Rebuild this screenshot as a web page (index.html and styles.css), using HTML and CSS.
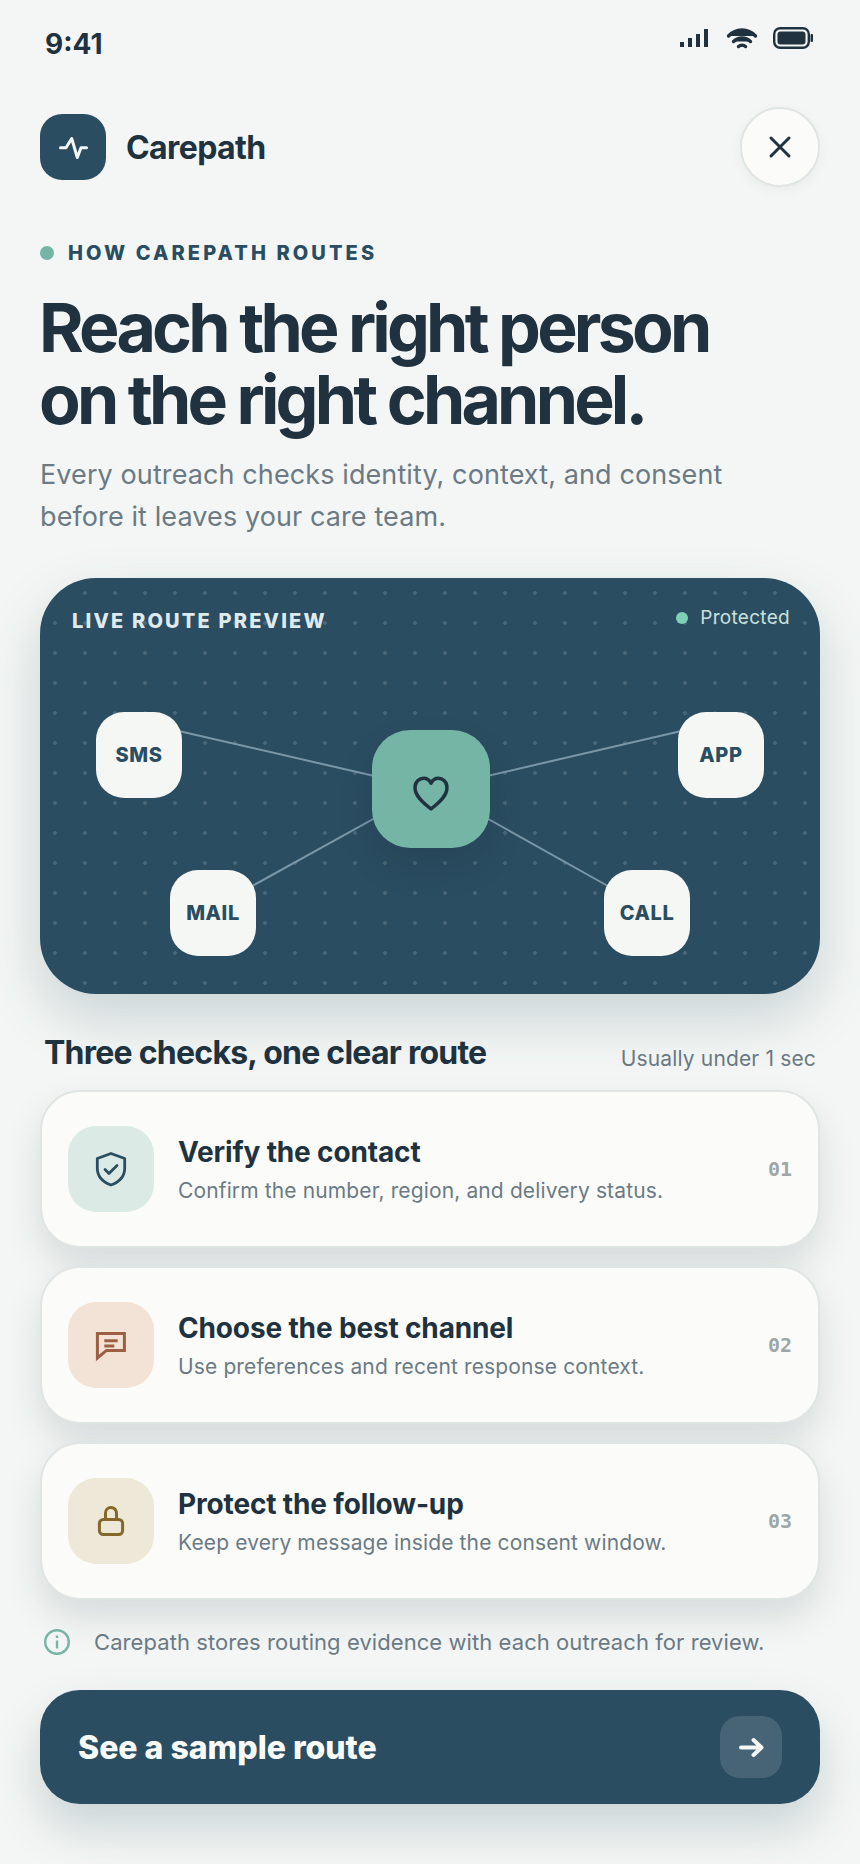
FILE: index.html
```html
<!DOCTYPE html>
<html lang="en">
<head>
    <meta charset="UTF-8">
    <title>Carepath</title>
    <link rel="stylesheet" href="styles.css">
</head>
<body>
    <div class="status-bar">
        <span class="time">9:41</span>
        <div class="status-icons">
            <svg width="28" height="18" viewBox="0 0 28 18"><rect x="0" y="13" width="4" height="5"/><rect x="8" y="9" width="4" height="9"/><rect x="16" y="5" width="4" height="13"/><rect x="24" y="0" width="4" height="18"/></svg>
            <svg class="wifi" width="32" height="22" viewBox="0 0 32 22" fill="none" stroke="#20323f" stroke-width="3.400" stroke-linecap="round"><path d="M2.500 9C10 1 22 1 29.500 9"/><path d="M7.500 14.500c5-4.600 12-4.600 17 0"/><path d="M12.500 19.500c2-1.800 5-1.800 7 0"/></svg>
            <svg width="40" height="22" viewBox="0 0 40 22"><rect x="1.200" y="1.200" width="34.600" height="19.600" rx="6" fill="none" stroke="#20323f" stroke-width="2.400"/><rect x="4.500" y="4.500" width="28" height="13" rx="3" fill="#20323f"/><rect x="37.500" y="7" width="2.500" height="8" rx="1" fill="#20323f"/></svg>
        </div>
    </div>

    <div class="brand-row">
        <div class="brand">
            <div class="brand-logo">
                <svg width="32" height="32" viewBox="0 0 32 32" fill="none" stroke="#f5f7f5" stroke-width="3" stroke-linecap="round" stroke-linejoin="round"><path d="M3.500 16.700H9L14.700 7.500 20.300 26.500 24 16.700h5.500"/></svg>
            </div>
            <span class="brand-name">Carepath</span>
        </div>
        <button class="close-btn">
            <svg width="30" height="30" viewBox="0 0 30 30" fill="none" stroke="#20323f" stroke-width="3" stroke-linecap="round"><path d="M6 6l18 18M24 6L6 24"/></svg>
        </button>
    </div>

    <div class="eyebrow"><span class="dot"></span>HOW CAREPATH ROUTES</div>
    <h1>Reach the right person<br>on the right channel.</h1>
    <p class="lead">Every outreach checks identity, context, and consent<br>before it leaves your care team.</p>

    <section class="route-card">
        <div class="route-head">
            <span class="route-title">LIVE ROUTE PREVIEW</span>
            <span class="protected"><span class="protected-dot"></span>Protected</span>
        </div>
        <svg class="route-lines" width="780" height="416" viewBox="0 0 780 416" fill="none" stroke="#7a97a8" stroke-width="2">
            <path d="M130 151L391 211"/>
            <path d="M650 151L391 211"/>
            <path d="M205 312L391 209"/>
            <path d="M575 312L391 209"/>
        </svg>
        <div class="node node-sms">SMS</div>
        <div class="node node-app">APP</div>
        <div class="node node-mail">MAIL</div>
        <div class="node node-call">CALL</div>
        <div class="hub">
            <svg width="46" height="46" viewBox="0 0 44 44" fill="none" stroke="#20323f" stroke-width="3.300" stroke-linejoin="round"><path d="M22 41C14 35 6.700 28.500 6.700 20.500 6.700 15 10.800 11.700 15 11.700c3 0 5.500 1.800 7 4.800 1.500-3 4-4.800 7-4.800 4.200 0 8.300 3.300 8.300 8.800C37.300 28.500 30 35 22 41z"/></svg>
        </div>
    </section>

    <div class="checks-head">
        <h2>Three checks, one clear route</h2>
        <span class="checks-note">Usually under 1 sec</span>
    </div>

    <div class="check-list">
        <div class="check">
            <div class="check-icon icon-green">
                <svg width="36" height="36" viewBox="0 0 36 36" fill="none" stroke="#2b4d61" stroke-width="2.800" stroke-linecap="round" stroke-linejoin="round"><path d="M18 2.500l13.700 5V17C31.700 26 25 31.500 18 34 11 31.500 4.300 26 4.300 17V7.500z"/><path d="M12 18.500l4 4 8-8"/></svg>
            </div>
            <div class="check-text">
                <h3>Verify the contact</h3>
                <p>Confirm the number, region, and delivery status.</p>
            </div>
            <span class="check-num">01</span>
        </div>
        <div class="check">
            <div class="check-icon icon-peach">
                <svg width="36" height="36" viewBox="0 0 36 36" fill="none" stroke="#9c5f42" stroke-width="3"><path d="M4.400 6.400h27v17H13.500L4.400 31z"/><path d="M11.300 13.700h13.400M11.300 19h10"/></svg>
            </div>
            <div class="check-text">
                <h3>Choose the best channel</h3>
                <p>Use preferences and recent response context.</p>
            </div>
            <span class="check-num">02</span>
        </div>
        <div class="check">
            <div class="check-icon icon-sand">
                <svg width="36" height="36" viewBox="0 0 36 36" fill="none" stroke="#86672a" stroke-width="3" stroke-linecap="round" stroke-linejoin="round"><rect x="6.400" y="16.400" width="23.200" height="15.200" rx="4"/><path d="M12.500 16.400V10a5.500 5.500 0 0 1 11 0v6.400"/></svg>
            </div>
            <div class="check-text">
                <h3>Protect the follow-up</h3>
                <p>Keep every message inside the consent window.</p>
            </div>
            <span class="check-num">03</span>
        </div>
    </div>

    <div class="evidence">
        <svg width="26" height="26" viewBox="0 0 26 26" fill="none" stroke="#74b5a6" stroke-width="2.400"><circle cx="13" cy="13" r="11.800"/><path d="M13 11.500v8M13 6.500v2.600"/></svg>
        <span>Carepath stores routing evidence with each outreach for review.</span>
    </div>

    <button class="cta">
        <span>See a sample route</span>
        <span class="cta-arrow">
            <svg width="28" height="28" viewBox="0 0 28 28" fill="none" stroke="#f5f7f5" stroke-width="4" stroke-linecap="round" stroke-linejoin="round"><path d="M4 14.500h20M16.500 7l8 7.500-8 7.500"/></svg>
        </span>
    </button>
</body>
</html>
```

FILE: styles.css
```css
* {
    box-sizing: border-box;
}

body {
    margin: 0;
    height: 1864px;
    padding: 0 40px;
    font-family: Inter, "Liberation Sans", sans-serif;
    color: #20323f;
    background-color: #f3f6f4;
    overflow: hidden;
}

.status-bar {
    display: flex;
    justify-content: space-between;
    height: 107px;
    padding: 26px 7px 0 5px;
}

.time {
    font-size: 28px;
    font-weight: 700;
    line-height: 36px;
}

.status-icons {
    display: flex;
    gap: 18px;
    height: 22px;
    margin-top: 1px;
    align-items: center;
}

.status-icons svg {
    fill: #20323f;
}

.status-icons .wifi {
    margin-right: -3px;
}

.brand-row {
    display: flex;
    justify-content: space-between;
    align-items: center;
    height: 80px;
}

.brand {
    display: flex;
    align-items: center;
    gap: 20px;
}

.brand-logo {
    width: 66px;
    height: 66px;
    border-radius: 22px;
    background-color: #2b4d61;
    display: flex;
    align-items: center;
    justify-content: center;
}

.brand-name {
    margin-top: 1px;
    font-size: 32px;
    font-weight: 700;
    letter-spacing: -0.6px;
}

.close-btn {
    width: 80px;
    height: 80px;
    padding: 0;
    border-radius: 50%;
    border: 2px solid #dfe5e2;
    background-color: #fbfcfa;
    display: flex;
    align-items: center;
    justify-content: center;
    box-shadow: 0 4px 12px rgba(32, 50, 63, 0.05);
}

.eyebrow {
    display: flex;
    align-items: center;
    gap: 14px;
    margin-top: 52px;
    font-size: 20px;
    font-weight: 800;
    letter-spacing: 3.1px;
    line-height: 28px;
    color: #2b4d61;
}

.dot {
    width: 14px;
    height: 14px;
    border-radius: 50%;
    background-color: #74b5a6;
}

h1 {
    margin: 24px 0 0 -1px;
    font-size: 68px;
    font-weight: 700;
    line-height: 72px;
    letter-spacing: -3.8px;
}

.lead {
    margin: 19px 0 0;
    font-size: 27px;
    line-height: 42px;
    letter-spacing: 0.1px;
    color: #6b7a84;
}

.route-card {
    position: relative;
    height: 416px;
    margin-top: 40px;
    border-radius: 56px;
    background-color: #2b4d61;
    background-image: radial-gradient(circle, rgba(255, 255, 255, 0.14) 1.6px, transparent 2.2px);
    background-size: 30px 30px;
    box-shadow: 0 24px 56px rgba(43, 77, 97, 0.2);
}

.route-head {
    display: flex;
    justify-content: space-between;
    align-items: flex-start;
    padding: 31px 30px 0 32px;
}

.route-title {
    font-size: 20px;
    font-weight: 800;
    letter-spacing: 2.2px;
    line-height: 24px;
    color: #dfeaee;
}

.protected {
    display: flex;
    align-items: center;
    gap: 12px;
    margin-top: -3px;
    font-size: 19px;
    letter-spacing: 0.3px;
    line-height: 24px;
    color: #c9e0dc;
}

.protected-dot {
    width: 12px;
    height: 12px;
    border-radius: 50%;
    background-color: #7fd1b5;
}

.route-lines {
    position: absolute;
    left: 0;
    top: 0;
}

.node {
    position: absolute;
    width: 86px;
    height: 86px;
    border-radius: 28px;
    background-color: #f5f7f5;
    display: flex;
    align-items: center;
    justify-content: center;
    font-size: 20px;
    font-weight: 800;
    letter-spacing: 0.6px;
    color: #2b4d61;
}

.node-sms { left: 56px; top: 134px; }
.node-app { left: 638px; top: 134px; }
.node-mail { left: 130px; top: 292px; }
.node-call { left: 564px; top: 292px; }

.hub {
    position: absolute;
    left: 332px;
    top: 152px;
    width: 118px;
    height: 118px;
    border-radius: 38px;
    background-color: #74b5a6;
    display: flex;
    align-items: center;
    justify-content: center;
    box-shadow: 0 18px 32px rgba(20, 40, 55, 0.18);
}

.checks-head {
    display: flex;
    justify-content: space-between;
    align-items: flex-start;
    margin-top: 39px;
    padding: 0 4px;
}

h2 {
    margin: 0;
    font-size: 32px;
    font-weight: 700;
    line-height: 40px;
    letter-spacing: -0.75px;
}

.checks-note {
    margin-top: 10px;
    font-size: 21px;
    line-height: 32px;
    letter-spacing: 0.15px;
    color: #6b7a84;
}

.check-list {
    display: flex;
    flex-direction: column;
    gap: 18px;
    margin-top: 15px;
}

.check {
    display: flex;
    align-items: center;
    gap: 24px;
    height: 158px;
    padding: 0 26px;
    border: 2px solid #dfe5e2;
    border-radius: 40px;
    background-color: #fbfcfa;
    box-shadow: 0 18px 36px rgba(32, 50, 63, 0.13);
}

.check-icon {
    flex: none;
    width: 86px;
    height: 86px;
    border-radius: 28px;
    display: flex;
    align-items: center;
    justify-content: center;
}

.icon-green { background-color: #dceae5; }
.icon-peach { background-color: #f3e3d6; }
.icon-sand { background-color: #ede8d8; }

.check-text {
    flex: 1;
}

.check-text h3 {
    margin: 0;
    font-size: 28px;
    font-weight: 700;
    line-height: 36px;
    letter-spacing: -0.15px;
}

.check-text p {
    margin: 7px 0 0;
    font-size: 21px;
    line-height: 28px;
    letter-spacing: 0.13px;
    color: #6b7a84;
}

.check-num {
    font-family: "DejaVu Sans Mono", monospace;
    font-size: 20px;
    font-weight: 700;
    color: #a0a6a6;
}

.evidence {
    display: flex;
    align-items: center;
    gap: 24px;
    margin-top: 26px;
    padding-left: 4px;
    font-size: 22px;
    line-height: 32px;
    letter-spacing: 0.07px;
    color: #6b7a84;
}

.cta {
    display: flex;
    justify-content: space-between;
    align-items: center;
    width: 100%;
    height: 114px;
    margin-top: 32px;
    padding: 0 38px 0 38px;
    border: 0;
    border-radius: 40px;
    background-color: #2b4d61;
    color: #f9fbfa;
    font-family: inherit;
    font-size: 32px;
    font-weight: 800;
    letter-spacing: 0;
    box-shadow: 0 24px 48px rgba(43, 77, 97, 0.2);
}

.cta-arrow {
    width: 62px;
    height: 62px;
    border-radius: 20px;
    background-color: rgba(255, 255, 255, 0.13);
    display: flex;
    align-items: center;
    justify-content: center;
}
```
